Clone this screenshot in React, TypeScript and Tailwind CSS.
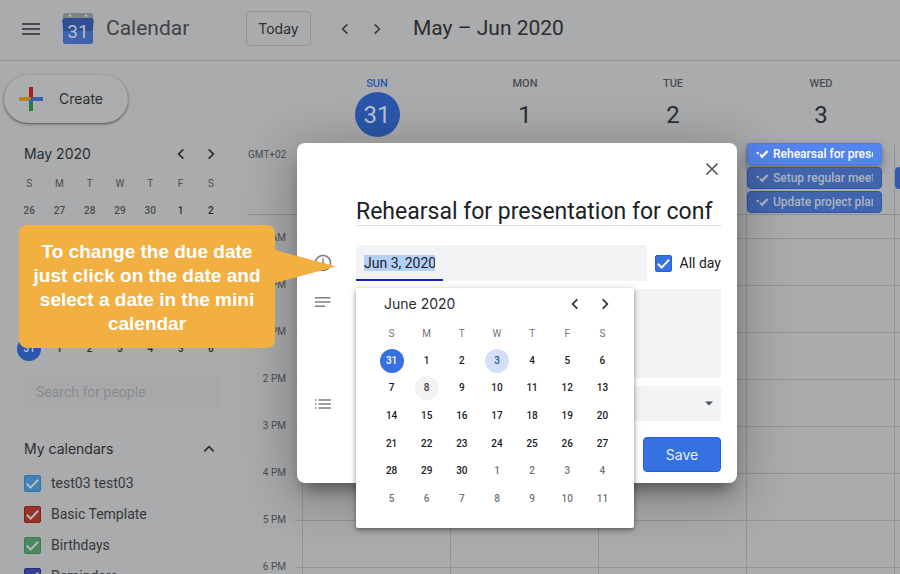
import React from 'react';
import { clsx } from 'clsx';

const weekdays = ['S', 'M', 'T', 'W', 'T', 'F', 'S'];

const mayWeeks = [
  [26, 27, 28, 29, 30, 1, 2],
  [3, 4, 5, 6, 7, 8, 9],
  [10, 11, 12, 13, 14, 15, 16],
  [17, 18, 19, 20, 21, 22, 23],
  [24, 25, 26, 27, 28, 29, 30],
  [31, 1, 2, 3, 4, 5, 6],
];

const juneWeeks = [
  [31, 1, 2, 3, 4, 5, 6],
  [7, 8, 9, 10, 11, 12, 13],
  [14, 15, 16, 17, 18, 19, 20],
  [21, 22, 23, 24, 25, 26, 27],
  [28, 29, 30, 1, 2, 3, 4],
  [5, 6, 7, 8, 9, 10, 11],
];

const days = [
  { name: 'SUN', date: 31, today: true },
  { name: 'MON', date: 1, today: false },
  { name: 'TUE', date: 2, today: false },
  { name: 'WED', date: 3, today: false },
];

const hours = ['11 AM', '12 PM', '1 PM', '2 PM', '3 PM', '4 PM', '5 PM', '6 PM'];

const calendars = [
  { name: 'test03 test03', color: 'bg-[#4480b4] border-[#2d79b8]' },
  { name: 'Basic Template', color: 'bg-[#93342b] border-[#94190f]' },
  { name: 'Birthdays', color: 'bg-[#4d8862] border-[#34814f]' },
  { name: 'Reminders', color: 'bg-[#353f8c] border-[#1f2a8c]' },
];

interface ChevronProps {
  direction: 'left' | 'right' | 'up';
}

const chevronPaths = {
  left: 'M10.5 3.5 5.5 8.5l5 5',
  right: 'M5.5 3.5l5 5-5 5',
  up: 'M3 11l5-5 5 5',
};

const Chevron: React.FC<ChevronProps> = ({ direction }) => (
  <svg className="h-4 w-4" viewBox="0 0 16 17" fill="none" stroke="currentColor" strokeWidth={1.8}>
    <path d={chevronPaths[direction]} />
  </svg>
);

interface CheckboxProps {
  id: string;
  color: string;
  tick?: string;
}

const Checkbox: React.FC<CheckboxProps> = ({ id, color, tick = 'text-white' }) => (
  <span className="relative h-[17px] w-[17px] shrink-0">
    <input
      type="checkbox"
      id={id}
      defaultChecked
      className={clsx('block h-[17px] w-[17px] appearance-none rounded-xs border', color)}
    />
    <svg
      className={clsx('pointer-events-none absolute inset-0 h-[17px] w-[17px]', tick)}
      viewBox="0 0 18 18"
      fill="none"
      stroke="currentColor"
      strokeWidth={2}
    >
      <path d="M3 9.3l4 4 8-8.3" />
    </svg>
  </span>
);

interface MonthTableProps {
  weeks: number[][];
  dim?: boolean;
}

const MonthTable: React.FC<MonthTableProps> = ({ weeks, dim = false }) => {
  // Days before the 1st and after the last day belong to neighbouring months
  const dayClass = (week: number, date: number) => {
    if (dim) {
      if (week === 5 && date === 31) return 'bg-[#2a56ab] text-[#c3cbdc]';
      if (week === 0 && date > 20) return 'text-[#4b4e51]';
      return 'text-[#2b2d30]';
    }
    if (week === 0 && date === 31) return 'bg-[#3571e0] text-white';
    if (week === 0 && date === 3) return 'bg-[#d4e0f9] text-[#2559b8]';
    if (week === 1 && date === 8) return 'bg-[#f1f3f4] text-[#3c4043]';
    if (week > 3 && date < 12) return 'text-[#70757a]';
    return 'text-[#202124]';
  };

  return (
    <table className="h-[193px] w-full table-fixed text-center text-[10px] leading-3">
      <thead>
        <tr className="h-[27px]">
          {weekdays.map((d, i) => (
            <th key={i} className={clsx('p-0 font-normal', dim ? 'text-[#4b4e51]' : 'text-[#70757a]')}>
              {d}
            </th>
          ))}
        </tr>
      </thead>
      <tbody>
        {weeks.map((week, w) => (
          <tr key={w}>
            {week.map(date => (
              <td key={date} className="p-0">
                <button
                  type="button"
                  className={clsx('mx-auto block h-6 w-6 rounded-full font-medium', dayClass(w, date))}
                >
                  {date}
                </button>
              </td>
            ))}
          </tr>
        ))}
      </tbody>
    </table>
  );
};

interface EventChipProps {
  title: string;
  active?: boolean;
}

const EventChip: React.FC<EventChipProps> = ({ title, active = false }) => (
  <button
    type="button"
    className={clsx(
      'mr-3 flex h-[22px] items-center gap-[3px] rounded-sm border px-2 text-left text-xs font-medium',
      active
        ? 'border-[#4a7de8] bg-[#5484ed] text-white shadow-[0_4px_8px_rgba(0,0,0,0.35)]'
        : 'border-[#2e56ab] bg-[#4164ae] text-[#adb4c1]'
    )}
  >
    <svg className="h-3 w-3.5 shrink-0" viewBox="0 0 14 12" fill="none" stroke="currentColor">
      <circle cx="1.8" cy="5" r="1.3" fill="currentColor" stroke="none" />
      <path d="M4 6.2l1.8 2.2" strokeWidth={1.8} />
      <path d="M5.2 9.6l6.4-6.6" strokeWidth={2.4} />
    </svg>
    <span className="min-w-0 flex-1 overflow-hidden whitespace-nowrap">{title}</span>
  </button>
);

const Header: React.FC = () => (
  <header className="flex h-[61px] shrink-0 items-center border-b border-[#929495] pb-[3px] pl-[22px] text-[#2b2d30]">
    <button type="button" aria-label="Main menu">
      <svg className="h-[18px] w-[18px]" viewBox="0 0 18 18" stroke="currentColor" strokeWidth={1.7}>
        <path d="M0 4h18M0 9h18M0 14h18" />
      </svg>
    </button>
    <svg className="ml-[22px] h-8 w-8" viewBox="0 0 32 32">
      <path d="M3 0h26a2 2 0 0 1 2 2v5H1V2a2 2 0 0 1 2-2z" fill="#818487" />
      <path d="M1.5 5h29L32 8c-.8 3-1 6-1 10H1c0-4-.2-7-1-10z" fill="#304f95" />
      <path d="M1 18h30v11a2 2 0 0 1-2 2H3a2 2 0 0 1-2-2z" fill="#3f62b0" />
      <circle cx="8" cy="2.6" r="1.2" fill="#b9bbbd" />
      <circle cx="24" cy="2.6" r="1.2" fill="#b9bbbd" />
      <text x="16" y="25" textAnchor="middle" fontFamily="Roboto, sans-serif" fontSize="19" fill="#b4bccb">
        31
      </text>
    </svg>
    <span className="ml-3 w-[140px] text-[21px] text-[#404346]">Calendar</span>
    <button
      type="button"
      className="h-[35px] w-[65px] rounded-sm border border-[#929495] font-['Inter',sans-serif] text-sm"
    >
      Today
    </button>
    <div className="ml-[26px] flex gap-4 text-[#3c3f42]">
      <button type="button" aria-label="Previous week">
        <Chevron direction="left" />
      </button>
      <button type="button" aria-label="Next week">
        <Chevron direction="right" />
      </button>
    </div>
    <h1 className="ml-7 text-[21px]">May – Jun 2020</h1>
  </header>
);

const Sidebar: React.FC = () => (
  <aside className="w-[248px] shrink-0 pt-[14px] text-[#2b2d30]">
    <button
      type="button"
      className="ml-1 flex h-12 w-[124px] items-center gap-4 rounded-full bg-[#abadae] pl-[15px] font-['Inter',sans-serif] text-sm shadow-[0_1px_2px_rgba(0,0,0,0.4),0_1px_3px_1px_rgba(0,0,0,0.12)]"
    >
      <svg className="h-6 w-6" viewBox="0 0 24 24">
        <path d="M10 0h4v12h-4z" fill="#ab1d1d" />
        <path d="M0 10h12v4H0z" fill="#b08421" />
        <path d="M10 14h4v10h-4z" fill="#24812f" />
        <path d="M14 10h10v4H14l-4 4v-4z" fill="#335fb5" />
      </svg>
      Create
    </button>

    <div className="mt-[21px] flex items-center justify-between pr-[29px] pl-6">
      <h2 className="font-['Inter',sans-serif] text-sm">May 2020</h2>
      <div className="flex gap-[14px]">
        <button type="button" aria-label="Previous month">
          <Chevron direction="left" />
        </button>
        <button type="button" aria-label="Next month">
          <Chevron direction="right" />
        </button>
      </div>
    </div>
    <div className="mt-[6px] pr-[22px] pl-[14px]">
      <MonthTable weeks={mayWeeks} dim />
    </div>

    <input
      type="text"
      aria-label="Search for people"
      placeholder="Search for people"
      className="mt-3 ml-6 h-[34px] w-[196px] rounded-sm bg-[#a6a8aa] px-3 text-sm placeholder:text-[#8a8c8e]"
    />

    <div className="mt-[30px] flex items-center justify-between pr-[31px] pl-6">
      <h2 className="font-['Inter',sans-serif] text-sm">My calendars</h2>
      <button type="button" aria-label="Collapse my calendars">
        <Chevron direction="up" />
      </button>
    </div>
    <ul className="mt-[14px] flex flex-col gap-[11px] pl-6">
      {calendars.map(calendar => (
        <li key={calendar.name} className="flex items-center gap-[10px]">
          <Checkbox id={calendar.name} color={calendar.color} tick="text-[#b9bcbf]" />
          <label htmlFor={calendar.name} className="text-sm text-[#36393c]">
            {calendar.name}
          </label>
        </li>
      ))}
    </ul>
  </aside>
);

const WeekView: React.FC = () => (
  <main className="min-w-0 flex-1 overflow-hidden">
    <div className="flex h-[82px] pr-[5px] pl-[55px]">
      {days.map(day => (
        <div key={day.name} className="flex flex-1 flex-col items-center pt-[15px]">
          <span
            className={clsx('text-[11px] leading-4 font-medium', day.today ? 'text-[#2a56ab]' : 'text-[#4b4e51]')}
          >
            {day.name}
          </span>
          <span
            className={clsx(
              'flex h-[45px] w-[45px] items-center justify-center rounded-full text-2xl',
              day.today ? 'bg-[#2a56ab] text-[#b9c1d0]' : 'text-[#2b2d30]'
            )}
          >
            {day.date}
          </span>
        </div>
      ))}
    </div>

    <div className="flex h-[72px] border-b border-[#8d8f90]">
      <span className="w-[54px] shrink-0 pt-1 pr-4 text-right text-[10px] leading-4 text-[#4b4e51]">GMT+02</span>
      <div className="flex-1 border-l border-[#929495]" />
      <div className="flex-1 border-l border-[#929495]" />
      <div className="flex-1 border-l border-[#929495]" />
      <div className="flex min-w-0 flex-1 flex-col gap-[2px] border-l border-[#929495]">
        <EventChip title="Rehearsal for presentation" active />
        <EventChip title="Setup regular meetings" />
        <EventChip title="Update project plans" />
      </div>
      <div className="w-[6px] border-l border-[#929495] pt-6">
        <div className="h-[22px] rounded-l-sm bg-[#3159ad]" />
      </div>
    </div>

    <div className="flex">
      <div className="w-[47px] pt-[15px] pr-[9px] text-right text-[10px] text-[#4b4e51]">
        {hours.map(hour => (
          <div key={hour} className="h-[47px] leading-4">
            {hour}
          </div>
        ))}
      </div>
      {/* Short ticks between the hour labels and the first day */}
      <div className="w-[7px]">
        <div className="h-6 border-b border-[#929495]" />
        {hours.map(hour => (
          <div key={hour} className="h-[47px] border-b border-[#929495]" />
        ))}
      </div>
      {[0, 1, 2, 3].map(column => (
        <div key={column} className="flex-1 border-l border-[#929495]">
          <div className="h-6 border-b border-[#929495]" />
          {hours.map(hour => (
            <div key={hour} className="h-[47px] border-b border-[#929495]" />
          ))}
        </div>
      ))}
      <div className="w-[6px] border-l border-[#929495]">
        <div className="h-6 border-b border-[#929495]" />
        {hours.map(hour => (
          <div key={hour} className="h-[47px] border-b border-[#929495]" />
        ))}
      </div>
    </div>
  </main>
);

const DatePicker: React.FC = () => (
  <div className="absolute top-[43px] left-0 z-10 h-[240px] w-[278px] rounded-xs bg-white pt-[6px] pr-[14px] pl-[18px] shadow-[0_2px_4px_rgba(0,0,0,0.35),0_1px_8px_rgba(0,0,0,0.15)]">
    <div className="mb-[6px] flex h-5 items-center justify-between pr-[7px] pl-[10px] text-[#2b2d30]">
      <h3 className="font-['Inter',sans-serif] text-sm">June 2020</h3>
      <div className="flex gap-[14px]">
        <button type="button" aria-label="Previous month">
          <Chevron direction="left" />
        </button>
        <button type="button" aria-label="Next month">
          <Chevron direction="right" />
        </button>
      </div>
    </div>
    <MonthTable weeks={juneWeeks} />
  </div>
);

const TaskDialog: React.FC = () => (
  <div
    role="dialog"
    aria-label="Edit task"
    className="absolute top-[143px] left-[297px] w-[440px] rounded-lg bg-white pr-4 pb-[11px] pl-[17px] text-[#202124] shadow-[0_12px_16px_-6px_rgba(0,0,0,0.4),0_10px_50px_10px_rgba(0,0,0,0.22)]"
  >
    <div className="flex justify-end pt-[18px]">
      <button type="button" aria-label="Close" className="text-[#4d5155]">
        <svg className="h-4 w-[18px]" viewBox="0 0 18 16" fill="none" stroke="currentColor" strokeWidth={1.6}>
          <path d="M3.5 2.5l11 11M14.5 2.5l-11 11" />
        </svg>
      </button>
    </div>

    <div className="mt-5 ml-[42px] border-b border-[#dadce0]">
      <input
        type="text"
        aria-label="Title"
        defaultValue="Rehearsal for presentation for conf"
        className="block h-7 w-full pt-[3px] text-[23px]"
      />
    </div>

    <div className="mt-[19px] flex items-center gap-6">
      <svg className="h-[18px] w-[18px] shrink-0" viewBox="0 0 18 18" fill="none" stroke="#7c8085" strokeWidth={1.5}>
        <circle cx="9" cy="9" r="7.6" />
        <path d="M9 4.5v5l3.5 2" />
      </svg>
      <div className="relative flex flex-1 items-center gap-2">
        <div className="flex h-9 flex-1 bg-[#f1f3f4]">
          <div className="flex w-[87px] items-center border-b-2 border-[#1a1fc0] px-2 pt-[2px]">
            <input
              type="text"
              aria-label="Due date"
              defaultValue="Jun 3, 2020"
              className="h-4 w-full bg-[#b3d1f8] text-sm leading-4 outline-none"
            />
          </div>
        </div>
        <div className="flex items-center gap-2">
          <Checkbox id="all-day" color="bg-[#3571e0] border-[#1f62dc]" />
          <label htmlFor="all-day" className="text-sm whitespace-nowrap">
            All day
          </label>
        </div>
        <DatePicker />
      </div>
    </div>

    <div className="mt-2 flex gap-6">
      <svg className="mt-1 h-[18px] w-[18px] shrink-0" viewBox="0 0 18 18" stroke="#7c8085" strokeWidth={1.4}>
        <path d="M1 4.7h15.5M1 9h15.5M1 13.3h10" />
      </svg>
      <textarea aria-label="Description" className="h-[89px] flex-1 resize-none rounded-sm bg-[#f1f3f4]" />
    </div>

    <div className="mt-2 flex items-center gap-6">
      <svg className="h-[18px] w-[18px] shrink-0" viewBox="0 0 18 18" stroke="#7c8085" strokeWidth={1.4}>
        <path d="M1 5h1.5M4.5 5h12.5M1 9h1.5M4.5 9h12.5M1 13h1.5M4.5 13h12.5" />
      </svg>
      <div className="relative flex-1">
        <select aria-label="Task list" className="block h-[35px] w-full appearance-none rounded-sm bg-[#f1f3f4]" />
        <svg className="pointer-events-none absolute top-[14px] right-2 h-2 w-2" viewBox="0 0 8 8">
          <path d="M0 1.5h8l-4 4z" fill="#4d5155" />
        </svg>
      </div>
    </div>

    <div className="mt-4 flex justify-end">
      <button
        type="button"
        className="h-[35px] w-[78px] rounded-sm border border-[#1f62dc] bg-[#3571e0] font-['Inter',sans-serif] text-sm text-[#e8effc]"
      >
        Save
      </button>
    </div>
  </div>
);

const Callout: React.FC = () => (
  <div className="absolute top-[225px] left-[19px] flex h-[123px] w-[256px] items-center justify-center rounded-lg bg-[#f1b03f] px-2 pt-[2px]">
    <p className="text-center font-['Liberation_Sans',Arial,sans-serif] text-[19px] leading-6 font-bold text-white">
      To change the due date just click on the date and select a date in the mini calendar
    </p>
    <svg className="absolute top-[25px] left-full h-[33px] w-[61px]" viewBox="0 0 61 33">
      <path d="M0 0l61 16.5L0 33z" fill="#f1b03f" />
    </svg>
  </div>
);

const App: React.FC = () => {
  return (
    <div className="relative flex h-screen flex-col overflow-hidden bg-[#a9abac] font-['Roboto',sans-serif]">
      <Header />
      <div className="flex min-h-0 flex-1">
        <Sidebar />
        <WeekView />
      </div>
      <TaskDialog />
      <Callout />
    </div>
  );
};

export default App;
